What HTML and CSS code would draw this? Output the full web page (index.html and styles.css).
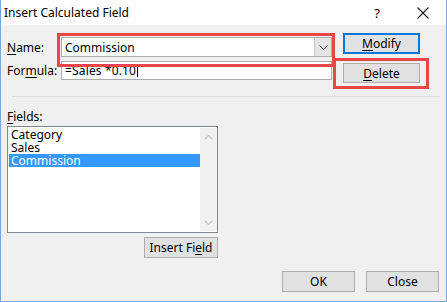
FILE: index.html
```html
<!DOCTYPE html>
<html>
<head>
<meta charset="utf-8">
<link rel="stylesheet" href="styles.css">
</head>
<body>
<div class="win">
  <div class="titlebar">
    <span class="title">Insert Calculated Field</span>
    <span class="help">?</span>
    <svg class="close-x" width="12" height="12" viewBox="0 0 12 12"><path d="M0.5 0.5 L11.5 11.5 M11.5 0.5 L0.5 11.5" stroke="#1a1a1a" stroke-width="1.1" fill="none"/></svg>
  </div>
  <div class="body">
    <div class="top">
      <div class="form">
        <div class="row">
          <label class="lbl"><u>N</u>ame:</label>
          <div class="combo">
            <span class="val">Commission</span>
            <span class="drop"><svg width="9" height="5" viewBox="0 0 9 5"><path d="M0.5 0.5 L4.5 4.5 L8.5 0.5" stroke="#444" stroke-width="1" fill="none"/></svg></span>
          </div>
        </div>
        <div class="row row2">
          <label class="lbl">For<u>m</u>ula:</label>
          <div class="field"><span class="val">=Sales *0.10</span><span class="caret"></span></div>
        </div>
      </div>
      <div class="btns">
        <button class="btn btn-default"><u>M</u>odify</button>
        <button class="btn btn-del"><u>D</u>elete</button>
      </div>
    </div>
    <div class="sep"></div>
    <div class="fields-lbl"><u>F</u>ields:</div>
    <div class="listwrap">
      <div class="list">
        <ul class="items">
          <li>Category</li>
          <li>Sales</li>
          <li class="sel">Commission</li>
        </ul>
        <div class="scroll">
          <svg width="9" height="5" viewBox="0 0 9 5"><path d="M0.5 4.5 L4.5 0.5 L8.5 4.5" stroke="#c8c8c8" stroke-width="1.2" fill="none"/></svg>
          <svg width="9" height="5" viewBox="0 0 9 5"><path d="M0.5 0.5 L4.5 4.5 L8.5 0.5" stroke="#c8c8c8" stroke-width="1.2" fill="none"/></svg>
        </div>
      </div>
      <button class="btn btn-insert">Insert Fi<u>e</u>ld</button>
    </div>
    <div class="footer">
      <button class="btn btn-foot">OK</button>
      <button class="btn btn-foot">Close</button>
    </div>
    <div class="mark mark-name"></div>
    <div class="mark mark-del"></div>
  </div>
</div>
</body>
</html>
```
FILE: styles.css
```css
* { box-sizing: border-box; }
body {
  margin: 0;
  font-family: "Noto Sans", "Open Sans", sans-serif;
  font-size: 12px;
  color: #000;
}
u { text-decoration: underline; text-underline-offset: 2px; }
.win {
  width: 447px;
  height: 302px;
  border: 1px solid #7aa7da;
  border-top: none;
  display: flex;
  flex-direction: column;
  background: #f0f0f0;
}
.titlebar {
  height: 25px;
  background: #fff;
  display: flex;
  align-items: center;
  padding-left: 3px;
}
.title { font-size: 12px; flex: 1; }
.help { width: 12px; margin-right: 34px; font-size: 13px; text-align: center; }
.close-x { margin-right: 17px; }
.body {
  position: relative;
  flex: 1;
  padding: 8px 0 0 6px;
}
.top { display: flex; }
.form { width: 326px; padding-top: 4px; }
.row { display: flex; align-items: center; height: 20px; }
.row2 { margin-top: 4px; height: 19px; }
.lbl { width: 54px; }
.combo, .field {
  width: 271px;
  height: 100%;
  background: #fff;
  border: 1px solid #abadb3;
  display: flex;
  align-items: center;
}
.val { padding-left: 3px; flex: 1; white-space: nowrap; }
.field .val { flex: none; padding-left: 3px; letter-spacing: 0.15px; }
.caret { width: 1px; height: 13px; background: #000; margin-left: 1px; }
.drop {
  width: 17px;
  height: 100%;
  background: #e5e5e5;
  border-left: 1px solid #c8c8c8;
  display: flex;
  align-items: center;
  justify-content: center;
}
.btns { display: flex; flex-direction: column; margin-left: 10px; }
.btn {
  font-family: inherit;
  font-size: 12px;
  background: #e1e1e1;
  border: 1px solid #adadad;
  padding: 0;
  color: #000;
}
.btn-default { width: 77px; height: 21px; border: 2px solid #0078d7; }
.btn-del { width: 77px; height: 20px; margin-top: 9px; }
.sep {
  height: 1px;
  background: #d8d8d8;
  margin: 13px 6px 0 5px;
}
.fields-lbl { margin-top: 12px; height: 16px; line-height: 16px; }
.listwrap { display: flex; flex-direction: column; align-items: flex-end; width: 211px; margin-top: 1px; }
.list {
  width: 211px;
  height: 107px;
  background: #fff;
  border: 1px solid #828790;
  display: flex;
  padding: 1px 0 1px 1px;
}
.items { list-style: none; margin: 0; padding: 0; flex: 1; }
.items li { height: 13px; line-height: 13px; padding-left: 2px; }
.items li.sel { background: #3399ff; color: #fff; }
.scroll {
  width: 17px;
  background: #f0f0f0;
  display: flex;
  flex-direction: column;
  justify-content: space-between;
  align-items: center;
  padding: 7px 0 6px;
}
.btn-insert { width: 74px; height: 21px; margin-top: 4px; }
.footer { display: flex; justify-content: flex-end; gap: 11px; margin-top: 13px; padding-right: 7px; }
.btn-foot { width: 73px; height: 21px; }
.mark { position: absolute; border: 3px solid #e8474a; }
.mark-name { left: 56px; top: 8px; width: 278px; height: 34px; }
.mark-del { left: 332px; top: 33px; width: 96px; height: 31px; }
```
